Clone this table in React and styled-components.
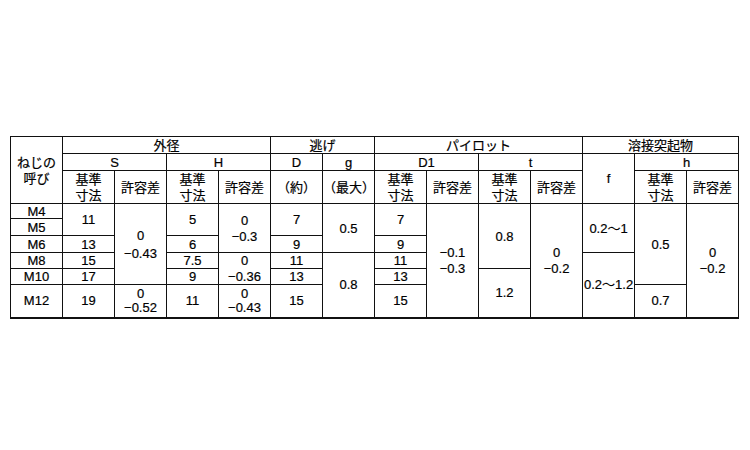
import React from 'react';
import styled, { createGlobalStyle } from 'styled-components';

const GlobalStyle = createGlobalStyle`
    html, body {
        margin: 0;
        padding: 0;
        background: #fff;
    }
`;

const Page = styled.div`
    width: 750px;
    height: 450px;
    padding: 136px 0 0 10px;
    box-sizing: border-box;
    font-family: "Liberation Sans", "Noto Sans CJK JP", sans-serif;
    font-size: 13px;
    color: #000;
    -webkit-text-stroke: 0.2px #000;
`;

const Table = styled.table`
    border-collapse: collapse;
    table-layout: fixed;
    width: 728px;
    border-bottom: 2px solid #111;

    col {
        width: 52px;
    }
`;

const Row = styled.tr`
    height: ${props => props.$h}px;
`;

const Th = styled.th`
    border: 1px solid #111;
    padding: 0;
    font-weight: 400;
    text-align: center;
    vertical-align: middle;
    line-height: 15px;
    white-space: nowrap;
`;

const Td = styled.td`
    border: 1px solid #111;
    padding: 0;
    text-align: center;
    vertical-align: middle;
    line-height: 13px;
    white-space: nowrap;
`;

const Pair = styled.span`
    display: inline-flex;
    flex-direction: column;
    align-items: center;
    gap: ${props => props.$gap ?? 3}px;
    line-height: 13px;
`;

const Jp = styled.span`
    font-family: "Noto Sans CJK JP", sans-serif;
    font-size: 13px;
`;

const Stack = ({ top, bottom, gap }) => (
    <Pair $gap={gap}>
        <span>{top}</span>
        <span>{bottom}</span>
    </Pair>
);

const Basis = () => (
    <Jp>
        基準
        <br />
        寸法
    </Jp>
);

const App = () => {
    return (
        <Page>
            <GlobalStyle />
            <Table>
                <colgroup>
                    {Array.from({ length: 14 }).map((_, i) => (
                        <col key={i} />
                    ))}
                </colgroup>
                <thead>
                    <Row $h={16}>
                        <Th rowSpan={3}>
                            <Jp>
                                ねじの
                                <br />
                                呼び
                            </Jp>
                        </Th>
                        <Th colSpan={4}><Jp>外径</Jp></Th>
                        <Th colSpan={2}><Jp>逃げ</Jp></Th>
                        <Th colSpan={4}><Jp>パイロット</Jp></Th>
                        <Th colSpan={3}><Jp>溶接突起物</Jp></Th>
                    </Row>
                    <Row $h={17}>
                        <Th colSpan={2}>S</Th>
                        <Th colSpan={2}>H</Th>
                        <Th>D</Th>
                        <Th>g</Th>
                        <Th colSpan={2}>D1</Th>
                        <Th colSpan={2}>t</Th>
                        <Th rowSpan={2}>f</Th>
                        <Th colSpan={2}>h</Th>
                    </Row>
                    <Row $h={33}>
                        <Th><Basis /></Th>
                        <Th><Jp>許容差</Jp></Th>
                        <Th><Basis /></Th>
                        <Th><Jp>許容差</Jp></Th>
                        <Th><Jp>（約）</Jp></Th>
                        <Th><Jp>（最大）</Jp></Th>
                        <Th><Basis /></Th>
                        <Th><Jp>許容差</Jp></Th>
                        <Th><Basis /></Th>
                        <Th><Jp>許容差</Jp></Th>
                        <Th><Basis /></Th>
                        <Th><Jp>許容差</Jp></Th>
                    </Row>
                </thead>
                <tbody>
                    <Row $h={15}>
                        <Td>M4</Td>
                        <Td rowSpan={2}>11</Td>
                        <Td rowSpan={5}><Stack top="0" bottom="−0.43" gap={5} /></Td>
                        <Td rowSpan={2}>5</Td>
                        <Td rowSpan={3}><Stack top="0" bottom="−0.3" /></Td>
                        <Td rowSpan={2}>7</Td>
                        <Td rowSpan={3}>0.5</Td>
                        <Td rowSpan={2}>7</Td>
                        <Td rowSpan={6}><Stack top="−0.1" bottom="−0.3" /></Td>
                        <Td rowSpan={4}>0.8</Td>
                        <Td rowSpan={6}><Stack top="0" bottom="−0.2" /></Td>
                        <Td rowSpan={3}>0.2～1</Td>
                        <Td rowSpan={5}>0.5</Td>
                        <Td rowSpan={6}><Stack top="0" bottom="−0.2" /></Td>
                    </Row>
                    <Row $h={17}>
                        <Td>M5</Td>
                    </Row>
                    <Row $h={17}>
                        <Td>M6</Td>
                        <Td>13</Td>
                        <Td>6</Td>
                        <Td>9</Td>
                        <Td>9</Td>
                    </Row>
                    <Row $h={16}>
                        <Td>M8</Td>
                        <Td>15</Td>
                        <Td>7.5</Td>
                        <Td rowSpan={2}><Stack top="0" bottom="−0.36" /></Td>
                        <Td>11</Td>
                        <Td rowSpan={3}>0.8</Td>
                        <Td>11</Td>
                        <Td rowSpan={3}>0.2～1.2</Td>
                    </Row>
                    <Row $h={16}>
                        <Td>M10</Td>
                        <Td>17</Td>
                        <Td>9</Td>
                        <Td>13</Td>
                        <Td>13</Td>
                        <Td rowSpan={2}>1.2</Td>
                    </Row>
                    <Row $h={33}>
                        <Td>M12</Td>
                        <Td>19</Td>
                        <Td><Stack top="0" bottom="−0.52" gap={1} /></Td>
                        <Td>11</Td>
                        <Td><Stack top="0" bottom="−0.43" gap={1} /></Td>
                        <Td>15</Td>
                        <Td>15</Td>
                        <Td>0.7</Td>
                    </Row>
                </tbody>
            </Table>
        </Page>
    );
};

export default App;
